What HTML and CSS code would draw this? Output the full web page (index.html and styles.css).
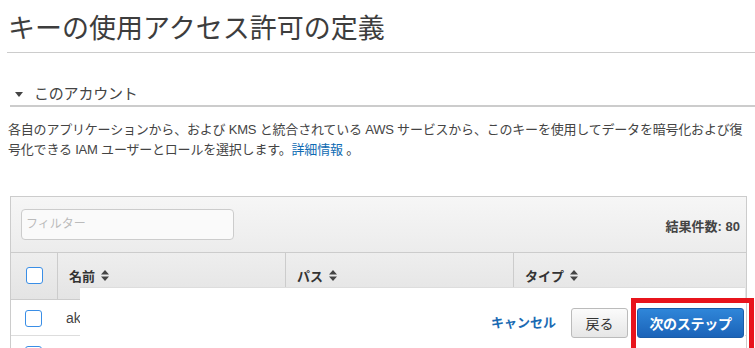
FILE: index.html
```html
<!DOCTYPE html>
<html lang="ja">
<head>
<meta charset="utf-8">
<link rel="stylesheet" href="styles.css">
</head>
<body>
<div class="page">
  <h1 class="title">キーの使用アクセス許可の定義</h1>
  <div class="section-head">
    <span class="caret"></span>
    <span class="section-title">このアカウント</span>
  </div>
  <p class="desc">各自のアプリケーションから、および KMS と統合されている AWS サービスから、このキーを使用してデータを暗号化および復号化できる IAM ユーザーとロールを選択します。<a class="link" href="#">詳細情報</a> 。</p>
  <div class="panel">
    <div class="toolbar">
      <div class="filter">フィルター</div>
      <div class="count">結果件数: 80</div>
    </div>
    <div class="thead">
      <div class="cell cb-cell"><span class="cb"></span></div>
      <div class="cell col-name">名前 <svg class="sort" width="8" height="11" viewBox="0 0 8 11"><path d="M4 0 L8 4.5 H0 Z M4 11 L8 6.5 H0 Z" fill="#444"/></svg></div>
      <div class="cell col-path">パス <svg class="sort" width="8" height="11" viewBox="0 0 8 11"><path d="M4 0 L8 4.5 H0 Z M4 11 L8 6.5 H0 Z" fill="#444"/></svg></div>
      <div class="cell col-type">タイプ <svg class="sort" width="8" height="11" viewBox="0 0 8 11"><path d="M4 0 L8 4.5 H0 Z M4 11 L8 6.5 H0 Z" fill="#444"/></svg></div>
    </div>
    <div class="row">
      <div class="cell cb-cell"><span class="cb"></span></div>
      <div class="cell col-name">akms</div>
    </div>
    <div class="row">
      <div class="cell cb-cell"><span class="cb"></span></div>
      <div class="cell col-name">admin</div>
    </div>
  </div>
  <div class="footer">
    <a class="cancel" href="#">キャンセル</a>
    <button class="btn btn-back">戻る</button>
    <div class="highlight"><button class="btn btn-next">次のステップ</button></div>
  </div>
</div>
</body>
</html>
```

FILE: styles.css
```css
html, body {
  margin: 0;
  padding: 0;
  background: #fff;
  overflow: hidden;
}
body {
  font-family: "Liberation Sans", "Noto Sans CJK JP", sans-serif;
  color: #444;
  width: 755px;
  height: 348px;
}
.page {
  position: relative;
  height: 348px;
  padding-left: 7px;
  overflow: hidden;
}
.title {
  margin: 0;
  padding: 9px 0 0 1px;
  height: 43px;
  font-size: 27px;
  font-weight: normal;
  line-height: 40px;
  color: #3d3d3d;
  border-bottom: 1px solid #ccc;
}
.section-head {
  margin: 30px 0 0 3px;
  height: 22px;
  display: flex;
  align-items: center;
  border-bottom: 2px solid #ccc;
}
.caret {
  width: 0;
  height: 0;
  border-left: 4px solid transparent;
  border-right: 4px solid transparent;
  border-top: 5px solid #444;
  margin-left: 5px;
  margin-right: 11px;
  margin-top: 1px;
}
.section-title {
  font-size: 15px;
  line-height: 20px;
  color: #444;
  letter-spacing: -0.2px;
}
.desc {
  margin: 13px 0 0 1px;
  width: 746px;
  font-size: 13px;
  line-height: 20px;
  letter-spacing: -0.2px;
  color: #444;
}
.link {
  color: #0f6bb3;
  text-decoration: none;
}
.panel {
  margin: 36px 0 0 3px;
  width: 735px;
  border: 1px solid #ccc;
  border-bottom: none;
}
.toolbar {
  height: 55px;
  display: flex;
  align-items: center;
  justify-content: space-between;
  padding: 0 6px 0 10px;
  background: linear-gradient(#f6f6f6, #ececec);
  border-bottom: 1px solid #ccc;
}
.filter {
  width: 207px;
  height: 29px;
  border: 1px solid #ccc;
  border-radius: 4px;
  background: #fafafa;
  font-size: 12px;
  line-height: 29px;
  color: #bbb;
  padding-left: 4px;
}
.count {
  font-size: 13px;
  font-weight: bold;
  color: #444;
  margin-top: 2px;
}
.thead {
  display: flex;
  height: 46px;
  background: linear-gradient(#eeeeee, #e4e4e4);
  border-bottom: 1px solid #ccc;
}
.cell {
  display: flex;
  align-items: center;
  font-size: 13px;
}
.thead .cell {
  font-weight: bold;
  color: #333;
  border-right: 1px solid #ccc;
  padding-bottom: 2px;
}
.thead .cell:last-child { border-right: none; }
.cb-cell {
  width: 46px;
  justify-content: center;
}
.col-name { width: 216px; padding-left: 11px; }
.col-path { width: 216px; padding-left: 11px; }
.col-type { flex: 1; padding-left: 11px; }
.cb {
  width: 15px;
  height: 15px;
  border: 1px solid #3a8ee6;
  border-radius: 3px;
  background: #fff;
}
.sort {
  margin-left: 6px;
}
.row {
  display: flex;
  height: 35px;
  border-bottom: 1px solid #ddd;
}
.row .cell { color: #444; font-size: 14px; }
.row .cb-cell { padding-top: 1px; width: 45px; }
.row .col-name { padding-left: 10px; }
.footer {
  position: absolute;
  left: 80px;
  top: 287px;
  width: 665px;
  height: 61px;
  background: #fff;
  border-top: 1px solid #ddd;
  display: flex;
  align-items: flex-start;
  justify-content: flex-end;
  padding-top: 20px;
  box-sizing: border-box;
}
.cancel {
  color: #1a6ab3;
  font-size: 13px;
  font-weight: bold;
  text-decoration: none;
  line-height: 30px;
  margin-right: 15px;
}
.btn {
  height: 30px;
  font-family: "Liberation Sans", "Noto Sans CJK JP", sans-serif;
  font-size: 14px;
  border-radius: 3px;
  padding: 0;
  cursor: pointer;
}
.btn-back {
  width: 57px;
  border: 1px solid #bbb;
  background: linear-gradient(#fbfbfb, #e6e6e6);
  color: #333;
  margin-right: 3px;
}
.highlight {
  border: 5px solid #e8141c;
  border-bottom: none;
  padding: 5px 5px 0 1px;
  margin-top: -10px;
  height: 50px;
  box-sizing: border-box;
  margin-right: -9px;
}
.btn-next {
  width: 107px;
  border: 1px solid #1a5ca8;
  background: linear-gradient(#2f86d9, #1b63b8);
  color: #fff;
  font-weight: bold;
  letter-spacing: -0.3px;
}
```
